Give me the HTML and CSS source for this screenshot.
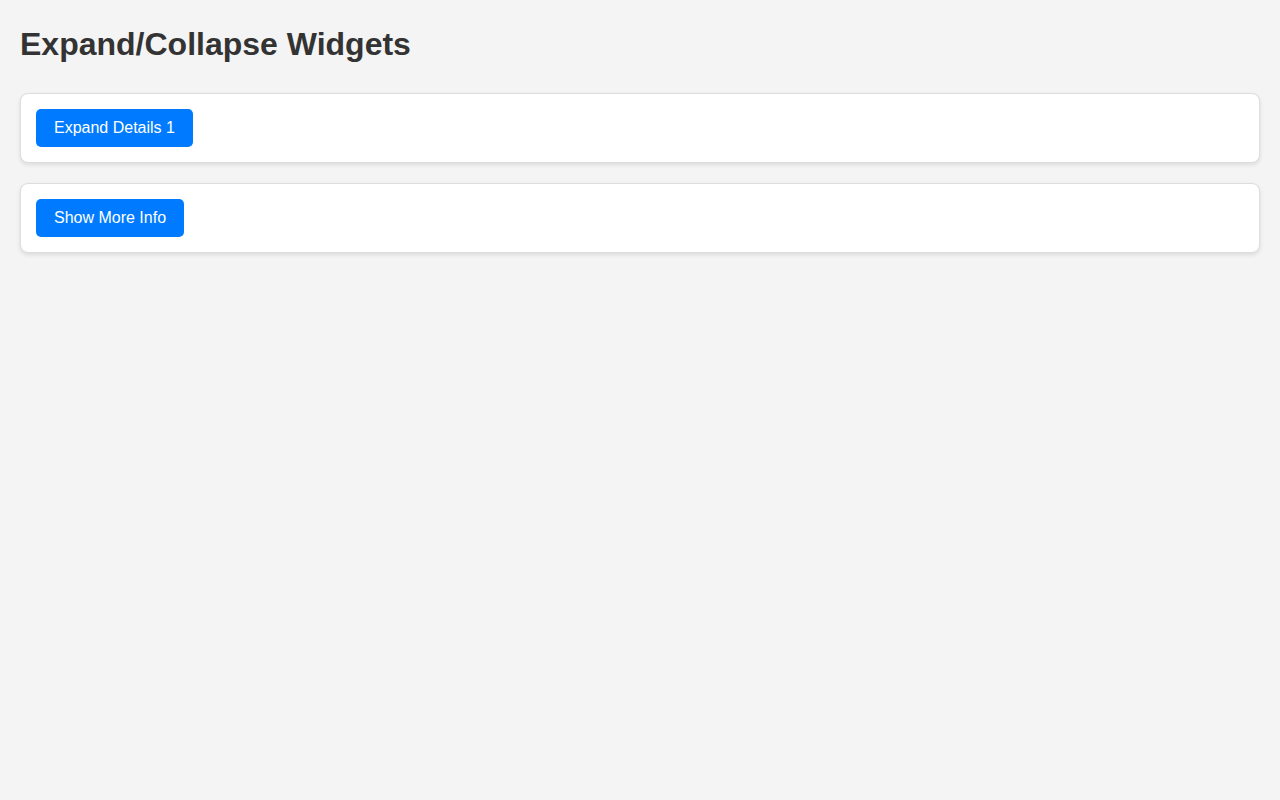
FILE: index.html
```html
<!DOCTYPE html>
<html lang="en">
<head>
  <meta charset="UTF-8">
  <meta name="viewport" content="width=device-width, initial-scale=1.0">
  <title>Expand/Collapse Widgets</title>
  <link rel="stylesheet" href="styles.css">
</head>
<body>
  <h1>Expand/Collapse Widgets</h1>

  <div class="widget">
    <button class="toggle-btn">Expand Details 1</button>
  </div>

  <div class="widget">
    <button class="toggle-btn">Show More Info</button>
  </div>
</body>
</html>
```

FILE: styles.css
```css
body {
  font-family: Arial, "Liberation Sans", sans-serif;
  background-color: #f4f4f4;
  color: #333;
  margin: 0;
  padding: 20px;
  line-height: 1.5;
}
h1 {
  font-size: 32px;
  margin: 0 0 25px;
}
.widget {
  background-color: #fff;
  border: 1px solid #ddd;
  border-radius: 8px;
  padding: 15px;
  margin-bottom: 20px;
  box-shadow: 0 2px 4px rgba(0, 0, 0, 0.1);
}
.toggle-btn {
  font-family: Arial, "Liberation Sans", sans-serif;
  font-size: 16px;
  line-height: normal;
  background-color: #007bff;
  color: #fff;
  border: none;
  border-radius: 5px;
  padding: 10px 18px;
  cursor: pointer;
}
```
